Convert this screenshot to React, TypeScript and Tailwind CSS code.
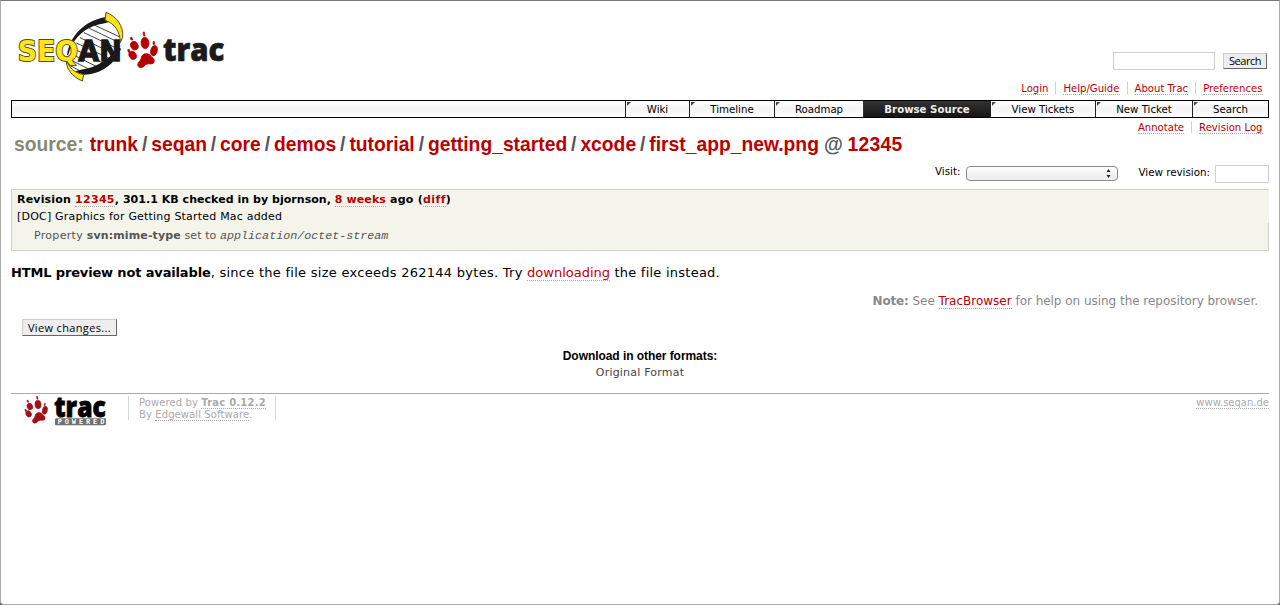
import type { ReactNode } from "react";

function Link({ children, className = "" }: { children: ReactNode; className?: string }) {
  return (
    <a href="#" className={`inline-block border-b border-dotted border-[#aaa] text-[#b00] ${className}`}>
      {children}
    </a>
  );
}

function Paw({ color }: { color: string }) {
  return (
    <g fill={color} stroke={color} strokeWidth="2" strokeLinejoin="round">
      <ellipse cx="43" cy="77" rx="11" ry="13.5" transform="rotate(-25 43 77)" />
      <ellipse cx="75" cy="69" rx="12" ry="17" transform="rotate(-4 75 69)" />
      <ellipse cx="102" cy="92" rx="10" ry="16" transform="rotate(14 102 92)" />
      <ellipse cx="38" cy="106" rx="10.5" ry="13" transform="rotate(-30 38 106)" />
      <path d="M53 136Q52 129 59 123Q64 116 65 108Q71 99 83 101Q91 103 95 111Q103 115 103 121Q104 132 93 132Q84 130 77 134Q69 144 61 143Q54 142 53 136Z" />
      <path d="M31 53L36 52L38 60L33 60ZM69 37L73 36L75 48L71 48ZM100 64L104 65L103 74L99 73ZM23 89L28 88L30 96L25 97Z" />
    </g>
  );
}

function HeaderLogo() {
  return (
    <svg width="240" height="99" viewBox="0 0 720 297" role="img" aria-label="SeqAn Trac">
      <path d="M203 170C207 110 258 68 322 60C350 78 368 100 363 140C345 190 290 222 232 218C212 208 202 190 203 170Z" fill="#fff" />
      <path d="M285 76L362 112M268 85L360 129M252 98L355 147M240 113L345 163M229 129L334 178M220 146L319 194M213 161L300 205M209 178L278 213M211 197L250 218" stroke="#444" strokeWidth="3" />
      <path d="M201 165C210 106 253 64 314 52L330 63C324 70 302 70 279 79C245 92 216 122 205 164Z" fill="#191919" />
      <path d="M363 146C348 190 300 224 252 224L226 215C234 208 262 208 286 197C316 184 336 166 354 140Z" fill="#191919" />
      <path d="M318 37C350 49 371 78 368 112L361 127C360 94 344 70 315 61Z" fill="#fce51c" stroke="#554e14" strokeWidth="3" />
      <path d="M201 179C206 203 222 218 251 224L247 243C216 230 199 207 199 183Z" fill="#fce51c" stroke="#554e14" strokeWidth="3" />
      <g fontFamily="DejaVu Sans, sans-serif" fontWeight="bold" fontSize="87">
        <text x="53" y="182" textLength="181" lengthAdjust="spacingAndGlyphs" fill="#fce51c" stroke="#554e14" strokeWidth="6" paintOrder="stroke">SEQ</text>
        <text x="235" y="183" textLength="130" lengthAdjust="spacingAndGlyphs" fill="#191919" stroke="#191919" strokeWidth="4">AN</text>
      </g>
      <g transform="translate(360 60)">
        <Paw color="#b50000" />
      </g>
      <text x="489" y="183" textLength="184" lengthAdjust="spacingAndGlyphs" fontFamily="Open Sans, sans-serif" fontWeight="800" fontSize="96" fill="#1b1b1b" stroke="#1b1b1b" strokeWidth="2">trac</text>
    </svg>
  );
}

function PoweredLogo() {
  return (
    <svg width="108" height="36" viewBox="0 0 324 108" role="img" aria-label="Trac Powered" className="shrink-0 overflow-visible">
      <g transform="translate(24 -21) scale(.76)">
        <Paw color="#9d1118" />
      </g>
      <text x="130" y="68" textLength="154" lengthAdjust="spacingAndGlyphs" fontFamily="Open Sans, sans-serif" fontWeight="800" fontSize="84" stroke="#000" strokeWidth="2.5">trac</text>
      <rect x="132" y="73" width="153" height="21" rx="4" fill="#707070" />
      <text x="140" y="91" textLength="140" fontFamily="Liberation Mono, monospace" fontWeight="bold" fontSize="21" fill="#fff">POWERED</text>
    </svg>
  );
}

const tabs = [
  { label: "Wiki", width: "w-[64px]" },
  { label: "Timeline", width: "w-[85px]" },
  { label: "Roadmap", width: "w-[89px]" },
  { label: "Browse Source", width: "w-[127px]", active: true },
  { label: "View Tickets", width: "w-[105px]" },
  { label: "New Ticket", width: "w-[97px]" },
  { label: "Search", width: "w-[76px]" },
];

const crumbs = ["trunk", "seqan", "core", "demos", "tutorial", "getting_started", "xcode", "first_app_new.png"];

function Nav({ items }: { items: string[] }) {
  return (
    <nav className="flex justify-end pr-[6.5px] text-[10.1px] leading-[12px]">
      {items.map((item, i) => (
        <span key={item} className={i ? "ml-[7px] h-[12px] border-l border-[#d0d0d0] pl-[7px]" : ""}>
          <Link className="h-[13px] leading-[13px]">{item}</Link>
        </span>
      ))}
    </nav>
  );
}

export default function App() {
  return (
    <div className="h-[605px] w-[1280px] overflow-hidden bg-[#555]">
      <div className="flex h-[605px] flex-col rounded-b-[4px] border border-[#aaa] border-t-[#777] bg-white pr-[10px] pl-[10px] font-['DejaVu_Sans','Verdana',sans-serif] text-black">
        <header className="flex h-[81px] shrink-0 justify-between">
          <div className="-mt-px -ml-[11px] h-[81px] shrink-0">
            <HeaderLogo />
          </div>
          <form className="flex items-start gap-2 pt-[51px] pr-[2px]">
            <input aria-label="Search query" className="h-[18px] w-[102px] border border-[#d0d0d0]" />
            <button type="button" className="mt-px h-[16px] w-[44px] border border-[#ccc] border-r-[#666] border-b-[#666] bg-[#eee] font-['Open_Sans',sans-serif] text-[11px] leading-[14px] tracking-[-0.45px]">Search</button>
          </form>
        </header>
        <div className="h-[18px] shrink-0">
          <Nav items={["Login", "Help/Guide", "About Trac", "Preferences"]} />
        </div>
        <nav className="flex h-[18px] shrink-0 justify-end border border-black bg-gradient-to-b from-white via-[#f4f4f4] to-white text-[10.2px] leading-[18px]">
          {tabs.map((t) =>
            t.active ? (
              <a key={t.label} href="#" className={`${t.width} h-[16px] border-l border-[#333] bg-gradient-to-b from-[#333] to-[#151515] text-center font-bold text-[#eee]`}>
                {t.label}
              </a>
            ) : (
              <a key={t.label} href="#" className={`${t.width} flex h-[16px] border-l border-[#222]`}>
                <svg width="6" height="6" className="-mr-[6px]">
                  <path d="M1 1H5L1 5Z" fill="#444" />
                </svg>
                <span className="flex-1 text-center">{t.label}</span>
              </a>
            ),
          )}
        </nav>
        <div className="h-[15px] shrink-0 pt-[3px]">
          <Nav items={["Annotate", "Revision Log"]} />
        </div>
        <h1 className="flex h-[24px] shrink-0 items-center pb-px pl-[3px] text-[19.3px] leading-[22px] font-bold whitespace-nowrap font-['Liberation_Sans',sans-serif]">
          <span className="w-[75.8px] text-[#887]">source:</span>
          {crumbs.map((c, i) => (
            <span key={c} className="flex">
              {i > 0 && <span className="w-[13.2px] text-center text-[#555]">/</span>}
              <a href="#" className="text-[#b00]">{c}</a>
            </span>
          ))}
          <span className="ml-[5px] w-[23.7px] text-[#555]">@</span>
          <a href="#" className="tracking-[0.25px] text-[#b00]">12345</a>
        </h1>
        <div className="flex h-[32px] shrink-0 items-start justify-end pt-[7px] text-[10.3px] leading-[14px]">
          <label className="mr-[6px]">Visit:</label>
          <div className="mt-[2px] flex h-[15px] w-[152px] items-center justify-end rounded-[4px] border border-[#8a8a8a] bg-gradient-to-b from-white via-[#f3f3f3] to-[#ececec] pr-[6px]">
            <svg width="5" height="9" viewBox="0 0 5 9">
              <path d="M2.5 0L4.5 3H.5ZM2.5 9L4.5 6H.5Z" fill="#222" />
            </svg>
          </div>
          <label className="mr-[5px] ml-[20px] pt-px">View revision:</label>
          <input aria-label="View revision" className="mt-px h-[18px] w-[54px] border border-[#d0d0d0]" />
        </div>
        <section className="relative h-[62px] shrink-0 border border-[#d0d0c8] border-r-0 bg-[#f4f4eb] pl-[5px] text-[11px] whitespace-pre">
          <div className="flex h-[18px] pt-[2px] leading-[15px] font-bold">
            <span className="tracking-[0.18px]">Revision </span>
            <Link className="h-[15px] leading-[15px] tracking-[0.3px]">12345</Link>
            <span className="tracking-[0.04px]">, 301.1 KB checked in by bjornson, </span>
            <Link className="h-[15px] leading-[15px] tracking-[0.1px]">8 weeks</Link>
            <span className="tracking-[0.25px]"> ago (</span>
            <Link className="h-[15px] leading-[15px] tracking-[0.4px]">diff</Link>
            <span>)</span>
          </div>
          <div className="h-[18px] leading-[18px] tracking-[0.2px]">[DOC] Graphics for Getting Started Mac added</div>
          <div className="flex pl-[17px] leading-[20px] text-[#555]">
            <span className="tracking-[0.3px]">Property </span>
            <b className="tracking-[0.13px]">svn:mime-type</b>
            <span className="tracking-[0.1px]"> set to </span>
            <i className="font-['Liberation_Mono',monospace] text-[11.7px]">application/octet-stream</i>
          </div>
          <div className="absolute right-0 bottom-0 h-[27px] w-px bg-[#d0d0d0]" />
        </section>
        <p className="flex h-[41px] shrink-0 pt-[13px] text-[13px] leading-[18px] whitespace-pre">
          <b className="tracking-[-0.15px]">HTML preview not available</b>
          <span className="tracking-[0.27px]">, since the file size exceeds 262144 bytes. Try </span>
          <Link className="h-[17px]">downloading</Link>
          <span className="tracking-[0.24px]"> the file instead.</span>
        </p>
        <p className="flex h-[27px] shrink-0 justify-end pt-px pr-[11px] text-[12px] leading-[17px] whitespace-pre text-[#888]">
          <b className="tracking-[-0.2px]">Note:</b>
          <span> See </span>
          <Link className="h-[16px]">TracBrowser</Link>
          <span className="tracking-[-0.03px]"> for help on using the repository browser.</span>
        </p>
        <div className="h-[29px] shrink-0 pl-[11px]">
          <button type="button" className="block h-[17px] w-[95px] border border-[#ccc] border-r-[#666] border-b-[#666] bg-[#eee] font-['Open_Sans',sans-serif] text-[11px] leading-[15px] tracking-[0.35px]">View changes...</button>
        </div>
        <div className="h-[45px] shrink-0 text-center">
          <h3 className="font-['Liberation_Sans',sans-serif] text-[12px] leading-[16px] font-bold tracking-[-0.06px]">Download in other formats:</h3>
          <a href="#" className="block text-[11px] leading-[18px] tracking-[0.2px] text-[#444]">Original Format</a>
        </div>
        <footer className="flex border-t border-[#aaa] text-[10px] leading-[14px] text-[#aaa]">
          <PoweredLogo />
          <div className="mt-[2px] ml-[9px] h-[24px] w-[148px] border-x border-[#d7d7d7] pl-[10px] whitespace-pre">
            <div className="flex h-[12px] tracking-[0.1px]">
              <span>Powered by </span>
              <Link className="h-[13px] font-bold tracking-[0.22px] text-[#aaa]!">Trac 0.12.2</Link>
            </div>
            <div className="flex h-[12px] tracking-[0.1px]">
              <span>By </span>
              <Link className="h-[13px] text-[#aaa]!">Edgewall Software</Link>
              <span>.</span>
            </div>
          </div>
          <div className="flex flex-1 justify-end pt-[2px]">
            <Link className="h-[13px] text-[#aaa]!">www.seqan.de</Link>
          </div>
        </footer>
      </div>
    </div>
  );
}
